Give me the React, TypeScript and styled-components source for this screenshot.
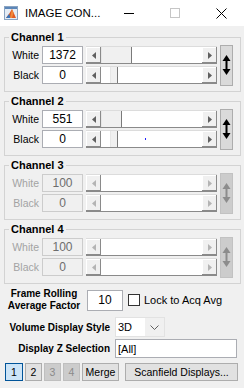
import React from "react";
import styled, { createGlobalStyle } from "styled-components";

const Global = createGlobalStyle`
  html, body { margin: 0; padding: 0; background: #f0f0f0; }
  body { font-family: "Liberation Sans", Arial, sans-serif; }
  * { box-sizing: border-box; }
`;

const Window = styled.div`
  width: 244px;
  height: 388px;
  overflow: hidden;
  display: flex;
  flex-direction: column;
  background: #f0f0f0;
`;

const TitleBar = styled.div`
  height: 26px;
  flex-shrink: 0;
  background: #fff;
  display: flex;
  align-items: center;
`;

const AppIcon = styled.svg`
  margin-left: 4px;
  flex-shrink: 0;
`;

const TitleText = styled.span`
  margin-left: 7px;
  flex: 1;
  font-size: 11.5px;
  color: #000;
  white-space: nowrap;
`;

const CtrlButton = styled.div`
  width: 46px;
  height: 26px;
  display: flex;
  align-items: center;
  justify-content: center;
`;

const MinLine = styled.div`
  width: 10px;
  height: 1px;
  background: #000;
`;

const MaxBox = styled.div`
  width: 10px;
  height: 10px;
  border: 1px solid #c6c6c6;
`;

const Body = styled.div`
  display: flex;
  flex-direction: column;
  padding-top: 4px;
`;

const Group = styled.fieldset`
  margin: 0 0 0 4px;
  width: 237px;
  min-width: 0;
  padding: 2px 7px 7px 0;
  border: 1px solid #d3d3d3;
  & + & {
    margin-top: 2px;
  }
`;

const Legend = styled.legend`
  margin-left: 4px;
  padding: 0 2px;
  font-size: 11px;
  font-weight: bold;
  line-height: 14px;
  color: #000;
`;

const ChannelGrid = styled.div`
  display: grid;
  grid-template-columns: 34px 41px 131px 13px;
  grid-template-rows: 18px 18px;
  column-gap: 3px;
  row-gap: 2px;
  align-items: center;
`;

const RowLabel = styled.div<{ $disabled?: boolean }>`
  text-align: right;
  font-size: 10.5px;
  color: ${(p) => (p.$disabled ? "#a3a3a3" : "#000")};
`;

const EditBox = styled.div<{ $disabled?: boolean; $w?: number; $h?: number; $align?: string }>`
  width: ${(p) => (p.$w ? `${p.$w}px` : "auto")};
  height: ${(p) => p.$h ?? 18}px;
  border: 1px solid ${(p) => (p.$disabled ? "#cccccc" : "#abadb3")};
  background: ${(p) => (p.$disabled ? "#f0f0f0" : "#fff")};
  color: ${(p) => (p.$disabled ? "#6d6d6d" : "#000")};
  font-size: ${(p) => (p.$align === "left" ? 11 : 12)}px;
  display: flex;
  align-items: center;
  justify-content: ${(p) => (p.$align === "left" ? "flex-start" : "center")};
  padding-left: ${(p) => (p.$align === "left" ? 2 : 0)}px;
  white-space: nowrap;
`;

const SliderBox = styled.div`
  height: 18px;
  display: flex;
  background: #fff;
  border-top: 1px solid #dcdcdc;
  border-bottom: 1px solid #8a8a8a;
`;

const ArrowBtn = styled.div`
  width: 15px;
  flex-shrink: 0;
  background: #f0f0f0;
  box-shadow: inset -1px -1px #8a8a8a, inset 1px 1px #fff;
  display: flex;
  align-items: center;
  justify-content: center;
`;

const Track = styled.div`
  flex: 1;
  display: flex;
  align-items: center;
  background: #fff;
  height: 100%;
`;

const Thumb = styled.div`
  height: 100%;
  flex-shrink: 0;
  background: #f0f0f0;
  box-shadow: inset -1px 0 #7a7a7a, inset 1px 0 #e6e6e6;
`;

const Dot = styled.div`
  width: 1px;
  height: 2px;
  background: #2020ff;
  flex-shrink: 0;
`;

const Toggle = styled.div<{ $disabled?: boolean }>`
  grid-column: 4;
  grid-row: 1 / span 2;
  height: 41px;
  align-self: center;
  background: ${(p) => (p.$disabled ? "#cccccc" : "#dadada")};
  border: 1px solid ${(p) => (p.$disabled ? "#c2c2c2" : "#adadad")};
  display: flex;
  align-items: center;
  justify-content: center;
`;

const Bottom = styled.div`
  display: flex;
  flex-direction: column;
  padding-top: 4px;
`;

const RowA = styled.div`
  height: 24px;
  display: flex;
  align-items: center;
  padding-left: 5px;
`;

const StackLabel = styled.div`
  width: 78px;
  text-align: center;
  font-size: 10px;
  font-weight: bold;
  line-height: 12px;
  color: #000;
`;

const CheckBox = styled.div`
  margin-left: 5px;
  width: 12px;
  height: 12px;
  border: 1px solid #333;
  background: #fff;
`;

const PlainText = styled.span`
  margin-left: 4px;
  font-size: 11px;
  color: #000;
  white-space: nowrap;
`;

const FormRow = styled.div<{ $h: number; $mt: number }>`
  margin-top: ${(p) => p.$mt}px;
  height: ${(p) => p.$h}px;
  display: grid;
  grid-template-columns: 106px auto;
  column-gap: 5px;
  align-items: center;
  padding-left: 4px;
`;

const FormLabel = styled.div`
  text-align: right;
  font-size: 10px;
  font-weight: bold;
  color: #000;
  white-space: nowrap;
`;

const Select = styled.div`
  width: 50px;
  height: 20px;
  display: flex;
  border: 1px solid #e2e2e2;
`;

const SelectText = styled.div`
  flex: 1;
  background: #fff;
  font-size: 11px;
  display: flex;
  align-items: center;
  padding-left: 2px;
`;

const SelectArrow = styled.div`
  width: 19px;
  background: #f0f0f0;
  display: flex;
  align-items: center;
  justify-content: center;
`;

const ButtonRow = styled.div`
  margin-top: 5px;
  height: 18px;
  display: flex;
  gap: 2px;
  padding-left: 5px;
`;

const PushButton = styled.div<{ $w: number; $state?: "selected" | "disabled"; $ml?: number }>`
  width: ${(p) => p.$w}px;
  margin-left: ${(p) => p.$ml ?? 0}px;
  height: 18px;
  font-size: 10.5px;
  display: flex;
  align-items: center;
  justify-content: center;
  white-space: nowrap;
  background: ${(p) => (p.$state === "selected" ? "#cce4f7" : p.$state === "disabled" ? "#cccccc" : "#e1e1e1")};
  border: 1px solid ${(p) => (p.$state === "selected" ? "#005499" : p.$state === "disabled" ? "#bfbfbf" : "#adadad")};
  color: ${(p) => (p.$state === "disabled" ? "#8a8a8a" : "#000")};
`;

const Tri = ({ dir, color }: { dir: "left" | "right"; color: string }) => (
  <svg width="4" height="7" viewBox="0 0 4 7">
    <polygon points={dir === "left" ? "4,0 0,3.5 4,7" : "0,0 4,3.5 0,7"} fill={color} />
  </svg>
);

const UpDown = ({ color }: { color: string }) => (
  <svg width="9" height="20" viewBox="0 0 9 20">
    <polygon points="4.5,0 0.5,6 8.5,6" fill={color} />
    <rect x="3.5" y="5" width="2" height="10" fill={color} />
    <polygon points="0.5,14 8.5,14 4.5,20" fill={color} />
  </svg>
);

type ThumbSpec = { o: number; w: number; dot?: number };

const Slider = ({ disabled, thumb }: { disabled?: boolean; thumb?: ThumbSpec }) => {
  const c = disabled ? "#b4b4b4" : "#606060";
  return (
    <SliderBox>
      <ArrowBtn>
        <Tri dir="left" color={c} />
      </ArrowBtn>
      <Track>
        {thumb && (
          <>
            <div style={{ width: thumb.o, flexShrink: 0 }} />
            <Thumb style={{ width: thumb.w }} />
            {thumb.dot !== undefined && <Dot style={{ marginLeft: thumb.dot }} />}
          </>
        )}
      </Track>
      <ArrowBtn>
        <Tri dir="right" color={c} />
      </ArrowBtn>
    </SliderBox>
  );
};

type Channel = {
  name: string;
  enabled: boolean;
  white: string;
  black: string;
  wt?: ThumbSpec;
  bt?: ThumbSpec;
};

const channels: Channel[] = [
  { name: "Channel 1", enabled: true, white: "1372", black: "0", wt: { o: 0, w: 31 }, bt: { o: 9, w: 8 } },
  { name: "Channel 2", enabled: true, white: "551", black: "0", wt: { o: 0, w: 21 }, bt: { o: 9, w: 8, dot: 27 } },
  { name: "Channel 3", enabled: false, white: "100", black: "0" },
  { name: "Channel 4", enabled: false, white: "100", black: "0" },
];

export default function App() {
  return (
    <>
      <Global />
      <Window>
        <TitleBar>
          <AppIcon width="14" height="14" viewBox="0 0 14 14">
            <rect x="0.5" y="0.5" width="13" height="13" fill="#e4ecf5" stroke="#8aa4c2" />
            <rect x="1" y="1" width="12" height="2" fill="#5b86b8" />
            <polygon points="2,12 5,8 8,3 12,12" fill="#e05a22" />
            <polygon points="2,12 5,8 7,12" fill="#3a74b8" />
            <polygon points="8,3 9.5,7 8,12 6,12" fill="#f08a3c" />
          </AppIcon>
          <TitleText>IMAGE CON...</TitleText>
          <CtrlButton>
            <MinLine />
          </CtrlButton>
          <CtrlButton>
            <MaxBox />
          </CtrlButton>
          <CtrlButton>
            <svg width="11" height="11" viewBox="0 0 11 11">
              <path d="M0.5 0.5 L10.5 10.5 M10.5 0.5 L0.5 10.5" stroke="#000" strokeWidth="1" />
            </svg>
          </CtrlButton>
        </TitleBar>
        <Body>
          {channels.map((ch) => (
            <Group key={ch.name}>
              <Legend>{ch.name}</Legend>
              <ChannelGrid>
                <RowLabel $disabled={!ch.enabled}>White</RowLabel>
                <EditBox $disabled={!ch.enabled}>{ch.white}</EditBox>
                <Slider disabled={!ch.enabled} thumb={ch.wt} />
                <Toggle $disabled={!ch.enabled}>
                  <UpDown color={ch.enabled ? "#000" : "#8c8c8c"} />
                </Toggle>
                <RowLabel $disabled={!ch.enabled}>Black</RowLabel>
                <EditBox $disabled={!ch.enabled}>{ch.black}</EditBox>
                <Slider disabled={!ch.enabled} thumb={ch.bt} />
              </ChannelGrid>
            </Group>
          ))}
          <Bottom>
            <RowA>
              <StackLabel>
                Frame Rolling
                <br />
                Average Factor
              </StackLabel>
              <EditBox $w={36} $h={21} style={{ marginLeft: 4 }}>
                10
              </EditBox>
              <CheckBox />
              <PlainText>Lock to Acq Avg</PlainText>
            </RowA>
            <FormRow $h={20} $mt={5}>
              <FormLabel>Volume Display Style</FormLabel>
              <Select>
                <SelectText>3D</SelectText>
                <SelectArrow>
                  <svg width="9" height="5" viewBox="0 0 9 5">
                    <polyline points="0.5,0.5 4.5,4.5 8.5,0.5" fill="none" stroke="#606060" strokeWidth="1" />
                  </svg>
                </SelectArrow>
              </Select>
            </FormRow>
            <FormRow $h={19} $mt={2}>
              <FormLabel>Display Z Selection</FormLabel>
              <EditBox $w={122} $h={19} $align="left">
                [All]
              </EditBox>
            </FormRow>
            <ButtonRow>
              <PushButton $w={18} $state="selected">1</PushButton>
              <PushButton $w={17}>2</PushButton>
              <PushButton $w={17} $state="disabled">3</PushButton>
              <PushButton $w={17} $state="disabled">4</PushButton>
              <PushButton $w={37}>Merge</PushButton>
              <PushButton $w={113} $ml={4}>Scanfield Displays...</PushButton>
            </ButtonRow>
          </Bottom>
        </Body>
      </Window>
    </>
  );
}
